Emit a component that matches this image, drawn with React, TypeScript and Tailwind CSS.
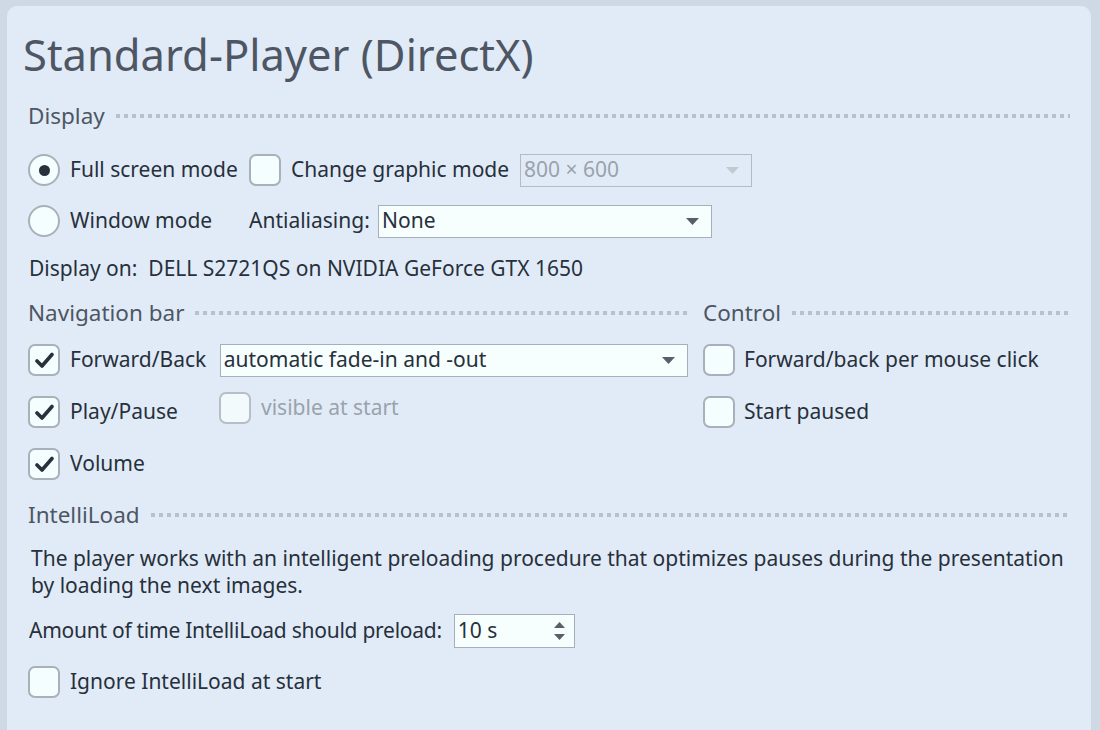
import React from "react";

const FONT = "font-['Noto_Sans','Open_Sans',sans-serif]";

function Dots() {
  return (
    <div className="flex-1 h-[4px] bg-[linear-gradient(to_right,#b8c0cb_4px,transparent_4px)] bg-[length:8px_4px]" />
  );
}

function SectionHeader({ label }: { label: string }) {
  return (
    <div className="flex items-center gap-[11px] h-[24px]">
      <span className="text-[22.5px] text-[#4e5663] leading-none">{label}</span>
      <Dots />
    </div>
  );
}

function Radio({ checked }: { checked?: boolean }) {
  return (
    <span className="w-[32px] h-[32px] rounded-full border-2 border-[#a8b0ba] bg-[#f5fefe] flex items-center justify-center shrink-0">
      {checked && <span className="w-[11px] h-[11px] rounded-full bg-[#28303c]" />}
    </span>
  );
}

function Check({ checked, disabled }: { checked?: boolean; disabled?: boolean }) {
  return (
    <span
      className={`w-[32px] h-[32px] rounded-[7px] border-2 flex items-center justify-center shrink-0 ${
        disabled ? "border-[#b7bec7] bg-[#f3fafc]" : "border-[#a8b0ba] bg-[#f5fefe]"
      }`}
    >
      {checked && (
        <svg width="19" height="17" viewBox="0 0 19 17">
          <polyline points="2,9 7,14 17,2.5" fill="none" stroke="#28303c" strokeWidth="3.6" strokeLinecap="round" strokeLinejoin="round" />
        </svg>
      )}
    </span>
  );
}

function Arrow({ color }: { color: string }) {
  return (
    <svg width="13" height="7" viewBox="0 0 13 7">
      <polygon points="0,0 13,0 6.5,7" fill={color} />
    </svg>
  );
}

function Select({ value, width, disabled }: { value: string; width: string; disabled?: boolean }) {
  return (
    <div
      className={`${width} h-[33px] border flex items-center justify-between pl-[3px] pr-[12px] ${
        disabled ? "border-[#b2bac5] bg-transparent text-[#9aa2ac]" : "border-[#a6b0bc] bg-[#f6fefe] text-[#27303b]"
      }`}
    >
      <span>{value}</span>
      <Arrow color={disabled ? "#c3c9d1" : "#5a5f67"} />
    </div>
  );
}

export default function App() {
  return (
    <div className={`w-[1100px] h-[730px] bg-[#cfd9e5] overflow-hidden pt-[6px] pl-[7px] ${FONT} text-[21px] text-[#27303b]`}>
      <div className="w-[1084px] h-[740px] rounded-[10px] bg-[#e1ebf7] pl-[21px] pr-[21px]">
        {/* Title */}
        <div className="pt-[22px] h-[76px] flex items-center">
          <h1 className="-ml-[5px] text-[43.5px] leading-none text-[#4e5663]">Standard-Player (DirectX)</h1>
        </div>

        {/* Display */}
        <div className="mt-[22px]">
          <SectionHeader label="Display" />
        </div>
        <div className="mt-[25px] h-[34px] flex items-center">
          <Radio checked />
          <span className="ml-[10px] w-[179px]">Full screen mode</span>
          <Check />
          <span className="ml-[10px] w-[229px]">Change graphic mode</span>
          <Select value="800 × 600" width="w-[232px]" disabled />
        </div>
        <div className="mt-[17px] h-[34px] flex items-center">
          <Radio />
          <span className="ml-[10px] w-[179px]">Window mode</span>
          <span className="w-[129px]">Antialiasing:</span>
          <Select value="None" width="w-[334px]" />
        </div>
        <div className="mt-[19px] h-[24px] flex items-center">
          <span className="ml-[1px] whitespace-pre">Display on:  DELL S2721QS on NVIDIA GeForce GTX 1650</span>
        </div>

        {/* Navigation bar + Control */}
        <div className="mt-[20px] flex gap-[15px]">
          <div className="w-[660px]">
            <SectionHeader label="Navigation bar" />
            <div className="mt-[18px] h-[34px] flex items-center">
              <Check checked />
              <span className="ml-[10px] w-[150px]">Forward/Back</span>
              <Select value="automatic fade-in and -out" width="w-[469px]" />
            </div>
            <div className="mt-[18px] h-[34px] flex items-center">
              <Check checked />
              <span className="ml-[10px] w-[149px]">Play/Pause</span>
              <span className="-mt-[8px] flex items-center">
                <Check disabled />
                <span className="ml-[10px] text-[#9aa2ac]">visible at start</span>
              </span>
            </div>
            <div className="mt-[18px] h-[34px] flex items-center">
              <Check checked />
              <span className="ml-[10px]">Volume</span>
            </div>
          </div>
          <div className="flex-1">
            <SectionHeader label="Control" />
            <div className="mt-[18px] h-[34px] flex items-center">
              <Check />
              <span className="ml-[9px]">Forward/back per mouse click</span>
            </div>
            <div className="mt-[18px] h-[34px] flex items-center">
              <Check />
              <span className="ml-[9px]">Start paused</span>
            </div>
          </div>
        </div>

        {/* IntelliLoad */}
        <div className="mt-[22px]">
          <SectionHeader label="IntelliLoad" />
        </div>
        <p className="mt-[18px] ml-[3px] leading-[27px] w-[1045px]">
          The player works with an intelligent preloading procedure that optimizes pauses during the presentation by loading the next images.
        </p>
        <div className="mt-[15px] h-[34px] flex items-center">
          <span className="ml-[1px] tracking-[-0.26px]">Amount of time IntelliLoad should preload:</span>
          <div className="ml-[12px] w-[121px] h-[34px] border border-[#a6b0bc] bg-[#f6fefe] flex items-center justify-between pl-[3px] pr-[9px]">
            <span>10 s</span>
            <span className="flex flex-col gap-[6px]">
              <svg width="11" height="6" viewBox="0 0 11 6"><polygon points="0,6 11,6 5.5,0" fill="#5a5f67" /></svg>
              <svg width="11" height="6" viewBox="0 0 11 6"><polygon points="0,0 11,0 5.5,6" fill="#5a5f67" /></svg>
            </span>
          </div>
        </div>
        <div className="mt-[17px] h-[34px] flex items-center">
          <Check />
          <span className="ml-[10px]">Ignore IntelliLoad at start</span>
        </div>
      </div>
    </div>
  );
}
